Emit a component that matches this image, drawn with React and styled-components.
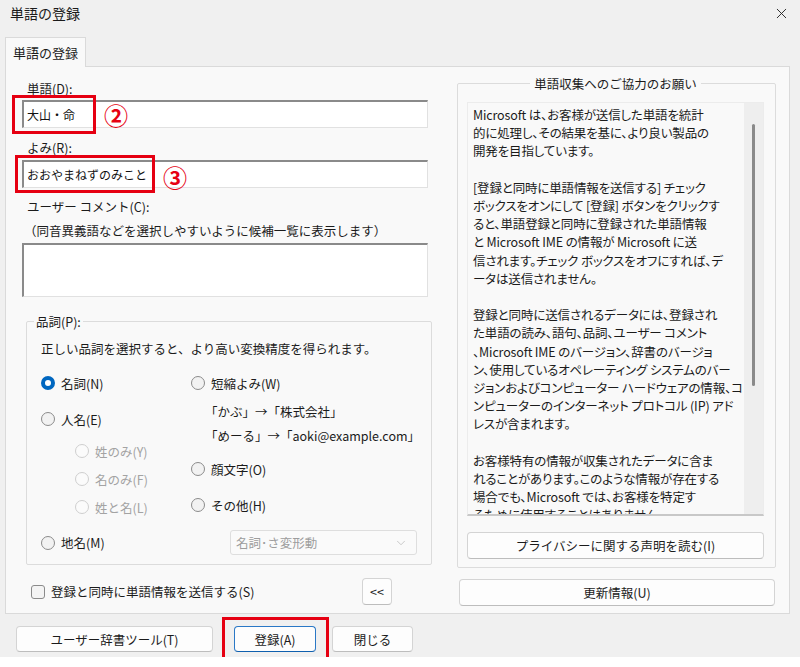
import React from 'react';
import styled, { createGlobalStyle } from 'styled-components';
import { X, ChevronDown } from 'lucide-react';

const GlobalStyle = createGlobalStyle`
  body {
    margin: 0;
    background: #ffffff;
    font-family: "Noto Sans CJK JP", "Noto Sans", sans-serif;
    font-size: 12.5px;
    color: #1b1b1b;
  }
  * { box-sizing: border-box; }
`;

const infoLines = [
  'Microsoft は、お客様が送信した単語を統計',
  '的に処理し、その結果を基に、より良い製品の',
  '開発を目指しています。',
  '',
  '[登録と同時に単語情報を送信する] チェック',
  'ボックスをオンにして [登録] ボタンをクリックす',
  'ると、単語登録と同時に登録された単語情報',
  'と Microsoft IME の情報が Microsoft に送',
  '信されます。チェック ボックスをオフにすれば、デ',
  'ータは送信されません。',
  '',
  '登録と同時に送信されるデータには、登録され',
  'た単語の読み、語句、品詞、ユーザー コメント',
  '、Microsoft IME のバージョン、辞書のバージョ',
  'ン、使用しているオペレーティング システムのバー',
  'ジョンおよびコンピューター ハードウェアの情報、コ',
  'ンピューターのインターネット プロトコル (IP) アド',
  'レスが含まれます。',
  '',
  'お客様特有の情報が収集されたデータに含ま',
  'れることがあります。このような情報が存在する',
  '場合でも、Microsoft では、お客様を特定す',
  'るために使用することはありません。',
];

const App = () => {
  return (
    <>
      <GlobalStyle />
      <Window>
        <TitleBar>
          <Title>単語の登録</Title>
          <X size={17} strokeWidth={1.3} color="#222" />
        </TitleBar>

        <TabStrip>
          <Tab>単語の登録</Tab>
        </TabStrip>

        <Panel>
          <LeftColumn>
            <Label>単語(D):</Label>
            <FieldWrap top={3}>
              <TextBox>大山・命</TextBox>
              <Marker left={-10} top={-5} w={84} h={39} />
              <Circled left={82} top={3}>②</Circled>
            </FieldWrap>

            <Label top={11}>よみ(R):</Label>
            <FieldWrap top={4}>
              <TextBox>おおやまねずのみこと</TextBox>
              <Marker left={-7} top={-5} w={140} h={38} />
              <Circled left={141} top={5}>③</Circled>
            </FieldWrap>

            <Label top={10}>ユーザー コメント(C):</Label>
            <Note>（同音異義語などを選択しやすいように候補一覧に表示します）</Note>
            <CommentBox />

            <PosGroup>
              <LeftLegend>品詞(P):</LeftLegend>
              <Hint>正しい品詞を選択すると、より高い変換精度を得られます。</Hint>
              <RadioColumns>
                <RadioCol>
                  <Radio checked label="名詞(N)" />
                  <Radio top={12} label="人名(E)" />
                  <SubRadios>
                    <Radio disabled tall label="姓のみ(Y)" />
                    <Radio disabled tall label="名のみ(F)" />
                    <Radio disabled tall label="姓と名(L)" />
                  </SubRadios>
                </RadioCol>
                <RadioCol>
                  <Radio label="短縮よみ(W)" />
                  <Example top={4}>「かぶ」→「株式会社」</Example>
                  <Example>「めーる」→「aoki@example.com」</Example>
                  <Radio top={10} label="顔文字(O)" />
                  <Radio top={12} label="その他(H)" />
                </RadioCol>
              </RadioColumns>
              <PlaceRow>
                <Radio label="地名(M)" />
                <Select>
                  <span>名詞･さ変形動</span>
                  <ChevronDown size={14} strokeWidth={1.2} color="#b5b5b5" />
                </Select>
              </PlaceRow>
            </PosGroup>

            <SendRow>
              <CheckLabel>
                <CheckBox />
                登録と同時に単語情報を送信する(S)
              </CheckLabel>
              <Button w={30} h={27}>&lt;&lt;</Button>
            </SendRow>
          </LeftColumn>

          <RightColumn>
            <InfoGroup>
              <CenterLegend>単語収集へのご協力のお願い</CenterLegend>
              <InfoBox>
                <InfoText>
                  {infoLines.map((line, i) => (
                    <InfoLine key={i}>{line || '\u00a0'}</InfoLine>
                  ))}
                </InfoText>
                <ScrollTrack>
                  <ScrollThumb />
                </ScrollTrack>
              </InfoBox>
              <Button full h={27} top={16}>プライバシーに関する声明を読む(I)</Button>
            </InfoGroup>
            <UpdateButton h={27}>更新情報(U)</UpdateButton>
          </RightColumn>
        </Panel>

        <BottomBar>
          <Button w={197} h={26}>ユーザー辞書ツール(T)</Button>
          <FieldWrap>
            <Button w={82} h={26} primary>登録(A)</Button>
            <Marker left={-12} top={-9} w={107} h={44} />
          </FieldWrap>
          <Button w={81} h={26}>閉じる</Button>
        </BottomBar>
      </Window>
    </>
  );
};

const Radio = ({ checked, disabled, label, top, tall }) => (
  <RadioRow top={top} tall={tall} disabled={disabled}>
    <RadioDot checked={checked} disabled={disabled} />
    {label}
  </RadioRow>
);

const Window = styled.div`
  width: 800px;
  height: 657px;
  background: #f0f0f0;
  display: flex;
  flex-direction: column;
`;

const TitleBar = styled.div`
  height: 26px;
  padding: 0 10px 0 10px;
  display: flex;
  align-items: center;
  justify-content: space-between;
`;

const Title = styled.div`
  font-size: 14px;
  color: #1a1a1a;
`;

const TabStrip = styled.div`
  margin-top: 11px;
  padding-left: 5px;
  display: flex;
`;

const Tab = styled.div`
  height: 30px;
  padding: 0 7px;
  display: flex;
  align-items: center;
  font-size: 13px;
  background: #f9f9f9;
  border: 1px solid #dadada;
  border-bottom: none;
  margin-bottom: -1px;
  position: relative;
  z-index: 1;
`;

const Panel = styled.div`
  margin: 0 10px 0 5px;
  height: 548px;
  background: #f9f9f9;
  border: 1px solid #dadada;
  padding-left: 16px;
  display: flex;
`;

const LeftColumn = styled.div`
  width: 410px;
  padding-top: 13px;
  display: flex;
  flex-direction: column;
`;

const Label = styled.div`
  line-height: 17px;
  margin-top: ${({ top }) => top || 0}px;
  padding-left: 5px;
`;

const FieldWrap = styled.div`
  position: relative;
  width: ${({ top }) => (top !== undefined ? '406px' : 'auto')};
  margin-top: ${({ top }) => top || 0}px;
`;

const TextBox = styled.div`
  height: 28px;
  background: #ffffff;
  border: 1px solid #e1e1e1;
  border-top: 2px solid #8a8a8a;
  border-left: 2px solid #8a8a8a;
  padding-left: 3px;
  display: flex;
  align-items: center;
  font-size: 12px;
  color: #111;
`;

const Marker = styled.div`
  position: absolute;
  left: ${({ left }) => left}px;
  top: ${({ top }) => top}px;
  width: ${({ w }) => w}px;
  height: ${({ h }) => h}px;
  border: 3px solid #e60012;
  pointer-events: none;
`;

const Circled = styled.div`
  position: absolute;
  left: ${({ left }) => left}px;
  top: ${({ top }) => top}px;
  font-size: 24px;
  line-height: 1;
  font-weight: 700;
  color: #e60012;
`;

const Note = styled.div`
  line-height: 17px;
  margin-top: 7px;
  padding-left: 2px;
`;

const CommentBox = styled.div`
  margin-top: 4px;
  width: 406px;
  height: 54px;
  background: #ffffff;
  border: 1px solid #e1e1e1;
  border-top: 2px solid #8a8a8a;
  border-left: 2px solid #8a8a8a;
`;

const PosGroup = styled.fieldset`
  margin: 16px 0 0 4px;
  width: 406px;
  min-width: 0;
  padding: 10px 14px 9px 14px;
  border: 1px solid #dcdcdc;
  border-radius: 2px;
`;

const LeftLegend = styled.legend`
  line-height: 17px;
  padding: 0 2px;
  margin-left: -7px;
`;

const Hint = styled.div`
  line-height: 17px;
`;

const RadioColumns = styled.div`
  margin-top: 14px;
  display: flex;
`;

const RadioCol = styled.div`
  width: 150px;
  display: flex;
  flex-direction: column;
`;

const SubRadios = styled.div`
  margin-top: 6px;
  padding-left: 34px;
  display: flex;
  flex-direction: column;
`;

const RadioRow = styled.div`
  height: ${({ tall }) => (tall ? 28 : 24)}px;
  margin-top: ${({ top }) => top || 0}px;
  display: flex;
  align-items: center;
  gap: 6px;
  white-space: nowrap;
  color: ${({ disabled }) => (disabled ? '#a3a3a3' : '#1b1b1b')};
`;

const RadioDot = styled.span`
  width: 14px;
  height: 14px;
  flex: none;
  border-radius: 50%;
  background: ${({ checked, disabled }) =>
    checked ? '#ffffff' : disabled ? '#fbfbfb' : '#f2f2f2'};
  border: ${({ checked, disabled }) =>
    checked ? '4px solid #0067c0' : disabled ? '1px solid #cfcfcf' : '1px solid #8b8b8b'};
`;

const Example = styled.div`
  height: 24px;
  margin-top: ${({ top }) => top || 0}px;
  padding-left: 14px;
  display: flex;
  align-items: center;
  white-space: nowrap;
`;

const PlaceRow = styled.div`
  margin-top: 9px;
  display: flex;
  align-items: center;
  justify-content: space-between;
`;

const Select = styled.div`
  width: 187px;
  height: 25px;
  border: 1px solid #dedede;
  border-radius: 3px;
  background: #fafafa;
  padding: 0 8px 0 5px;
  display: flex;
  align-items: center;
  justify-content: space-between;
  color: #9d9d9d;
`;

const SendRow = styled.div`
  margin-top: 13px;
  padding: 0 40px 0 9px;
  display: flex;
  align-items: center;
  justify-content: space-between;
`;

const CheckLabel = styled.div`
  display: flex;
  align-items: center;
  gap: 6px;
`;

const CheckBox = styled.span`
  width: 14px;
  height: 14px;
  border: 1px solid #8b8b8b;
  border-radius: 3px;
  background: #f4f4f4;
`;

const Button = styled.div`
  width: ${({ w, full }) => (full ? '100%' : `${w}px`)};
  height: ${({ h }) => h}px;
  margin-top: ${({ top }) => top || 0}px;
  flex: none;
  display: flex;
  align-items: center;
  justify-content: center;
  background: #fdfdfd;
  border: 1px solid ${({ primary }) => (primary ? '#2a78c6' : '#d4d4d4')};
  border-bottom-color: ${({ primary }) => (primary ? '#0f5fae' : '#bdbdbd')};
  border-radius: 4px;
  white-space: nowrap;
`;

const UpdateButton = styled(Button)`
  margin: 11px 1px 0 2px;
  width: auto;
`;

const RightColumn = styled.div`
  width: 319px;
  margin-left: 25px;
  padding-top: 8px;
  display: flex;
  flex-direction: column;
`;

const InfoGroup = styled.fieldset`
  margin: 0;
  min-width: 0;
  padding: 10px 11px 8px 9px;
  border: 1px solid #dcdcdc;
  border-radius: 2px;
  display: flex;
  flex-direction: column;
`;

const CenterLegend = styled.legend`
  margin: 0 auto;
  line-height: 17px;
  padding: 0 4px;
`;

const InfoBox = styled.div`
  height: 414px;
  display: flex;
  background: #f9f9f9;
  border: 1px solid #ececec;
  border-bottom: 2px solid #c8c8c8;
  overflow: hidden;
`;

const InfoText = styled.div`
  flex: 1;
  min-width: 0;
  overflow: hidden;
  padding: 3px 0 0 5px;
  font-feature-settings: "palt";
  letter-spacing: -0.15px;
`;

const InfoLine = styled.div`
  line-height: 18.2px;
  white-space: nowrap;
`;

const ScrollTrack = styled.div`
  width: 19px;
  flex: none;
  background: #eeeeee;
  display: flex;
  justify-content: center;
  padding-top: 21px;
`;

const ScrollThumb = styled.div`
  width: 3px;
  height: 262px;
  border-radius: 2px;
  background: #8a8a8a;
`;

const BottomBar = styled.div`
  margin-top: 12px;
  padding-left: 16px;
  display: flex;
  align-items: center;
  gap: 21px;

  & > :last-child {
    margin-left: -5px;
  }
`;

export default App;
